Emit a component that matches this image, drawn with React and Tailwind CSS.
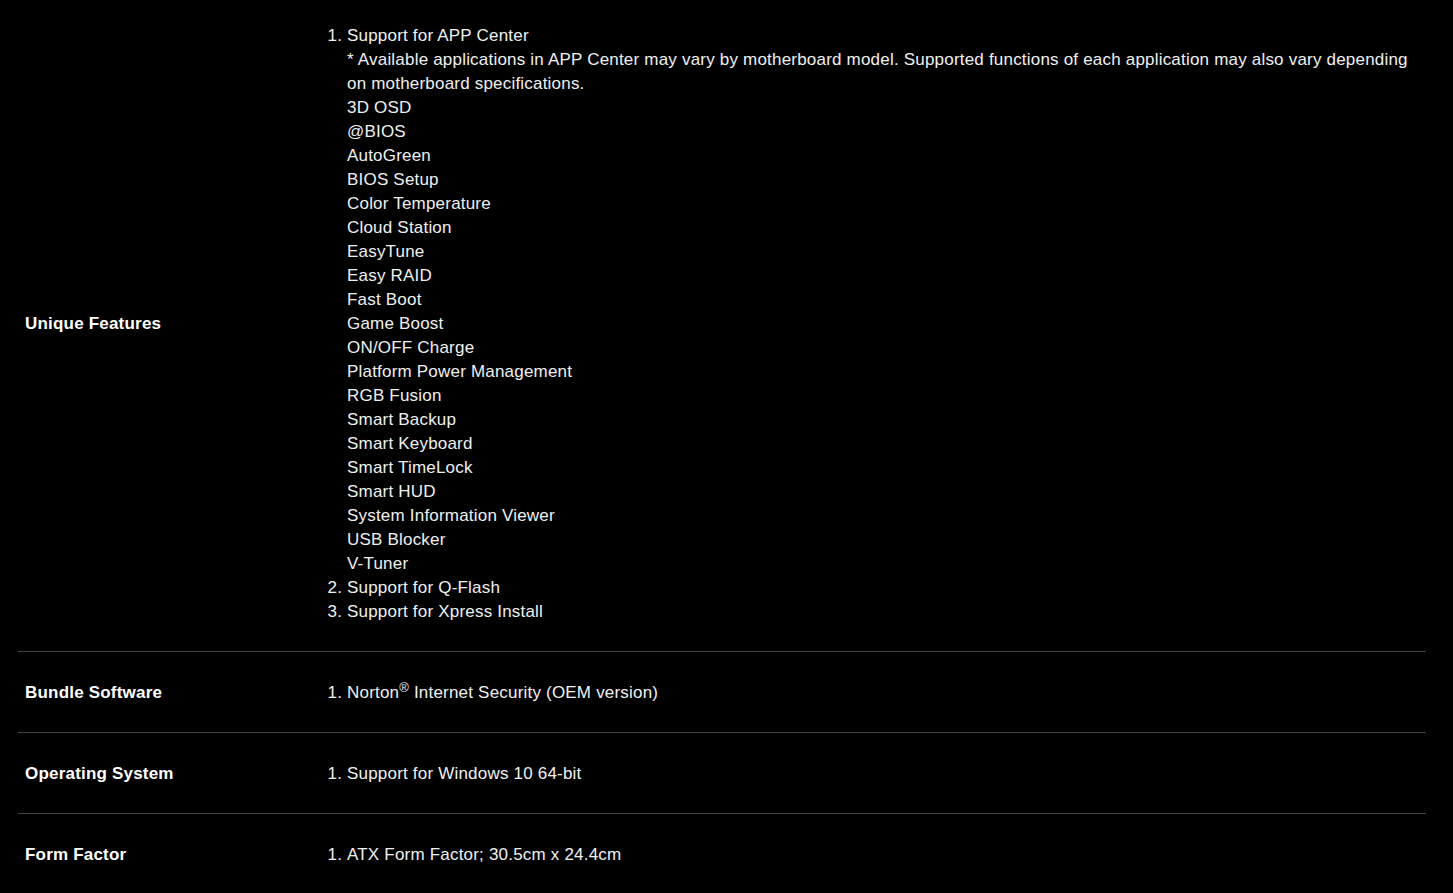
const apps = [
  '3D OSD',
  '@BIOS',
  'AutoGreen',
  'BIOS Setup',
  'Color Temperature',
  'Cloud Station',
  'EasyTune',
  'Easy RAID',
  'Fast Boot',
  'Game Boost',
  'ON/OFF Charge',
  'Platform Power Management',
  'RGB Fusion',
  'Smart Backup',
  'Smart Keyboard',
  'Smart TimeLock',
  'Smart HUD',
  'System Information Viewer',
  'USB Blocker',
  'V-Tuner',
];

function Row({ label, children, first }) {
  return (
    <div
      className={`grid grid-cols-[301px_1fr] items-center ${
        first ? 'pt-[24px] pb-[27px]' : 'pt-[29px] pb-[27px] border-t border-[#444444]'
      }`}
    >
      <div className="px-[7px] font-bold text-white">{label}</div>
      <div className="pr-[7px]">{children}</div>
    </div>
  );
}

export default function App() {
  return (
    <div
      className="min-h-screen bg-black text-[#f0f0f0] text-[17px] leading-[24px] tracking-[0.2px]"
      style={{ fontFamily: '"Liberation Sans", Arial, sans-serif' }}
    >
      <div className="ml-[18px] mr-[27px]">
        <Row label="Unique Features" first>
          <ol className="list-decimal pl-[28px]">
            <li>
              Support for APP Center
              <div>
                * Available applications in APP Center may vary by motherboard model. Supported functions of each
                application may also vary depending on motherboard specifications.
              </div>
              {apps.map((a) => (
                <div key={a}>{a}</div>
              ))}
            </li>
            <li>Support for Q-Flash</li>
            <li>Support for Xpress Install</li>
          </ol>
        </Row>

        <Row label="Bundle Software">
          <ol className="list-decimal pl-[28px]">
            <li>
              Norton<sup className="text-[13px]">®</sup> Internet Security (OEM version)
            </li>
          </ol>
        </Row>

        <Row label="Operating System">
          <ol className="list-decimal pl-[28px]">
            <li>Support for Windows 10 64-bit</li>
          </ol>
        </Row>

        <Row label="Form Factor">
          <ol className="list-decimal pl-[28px]">
            <li>ATX Form Factor; 30.5cm x 24.4cm</li>
          </ol>
        </Row>
      </div>
    </div>
  );
}
